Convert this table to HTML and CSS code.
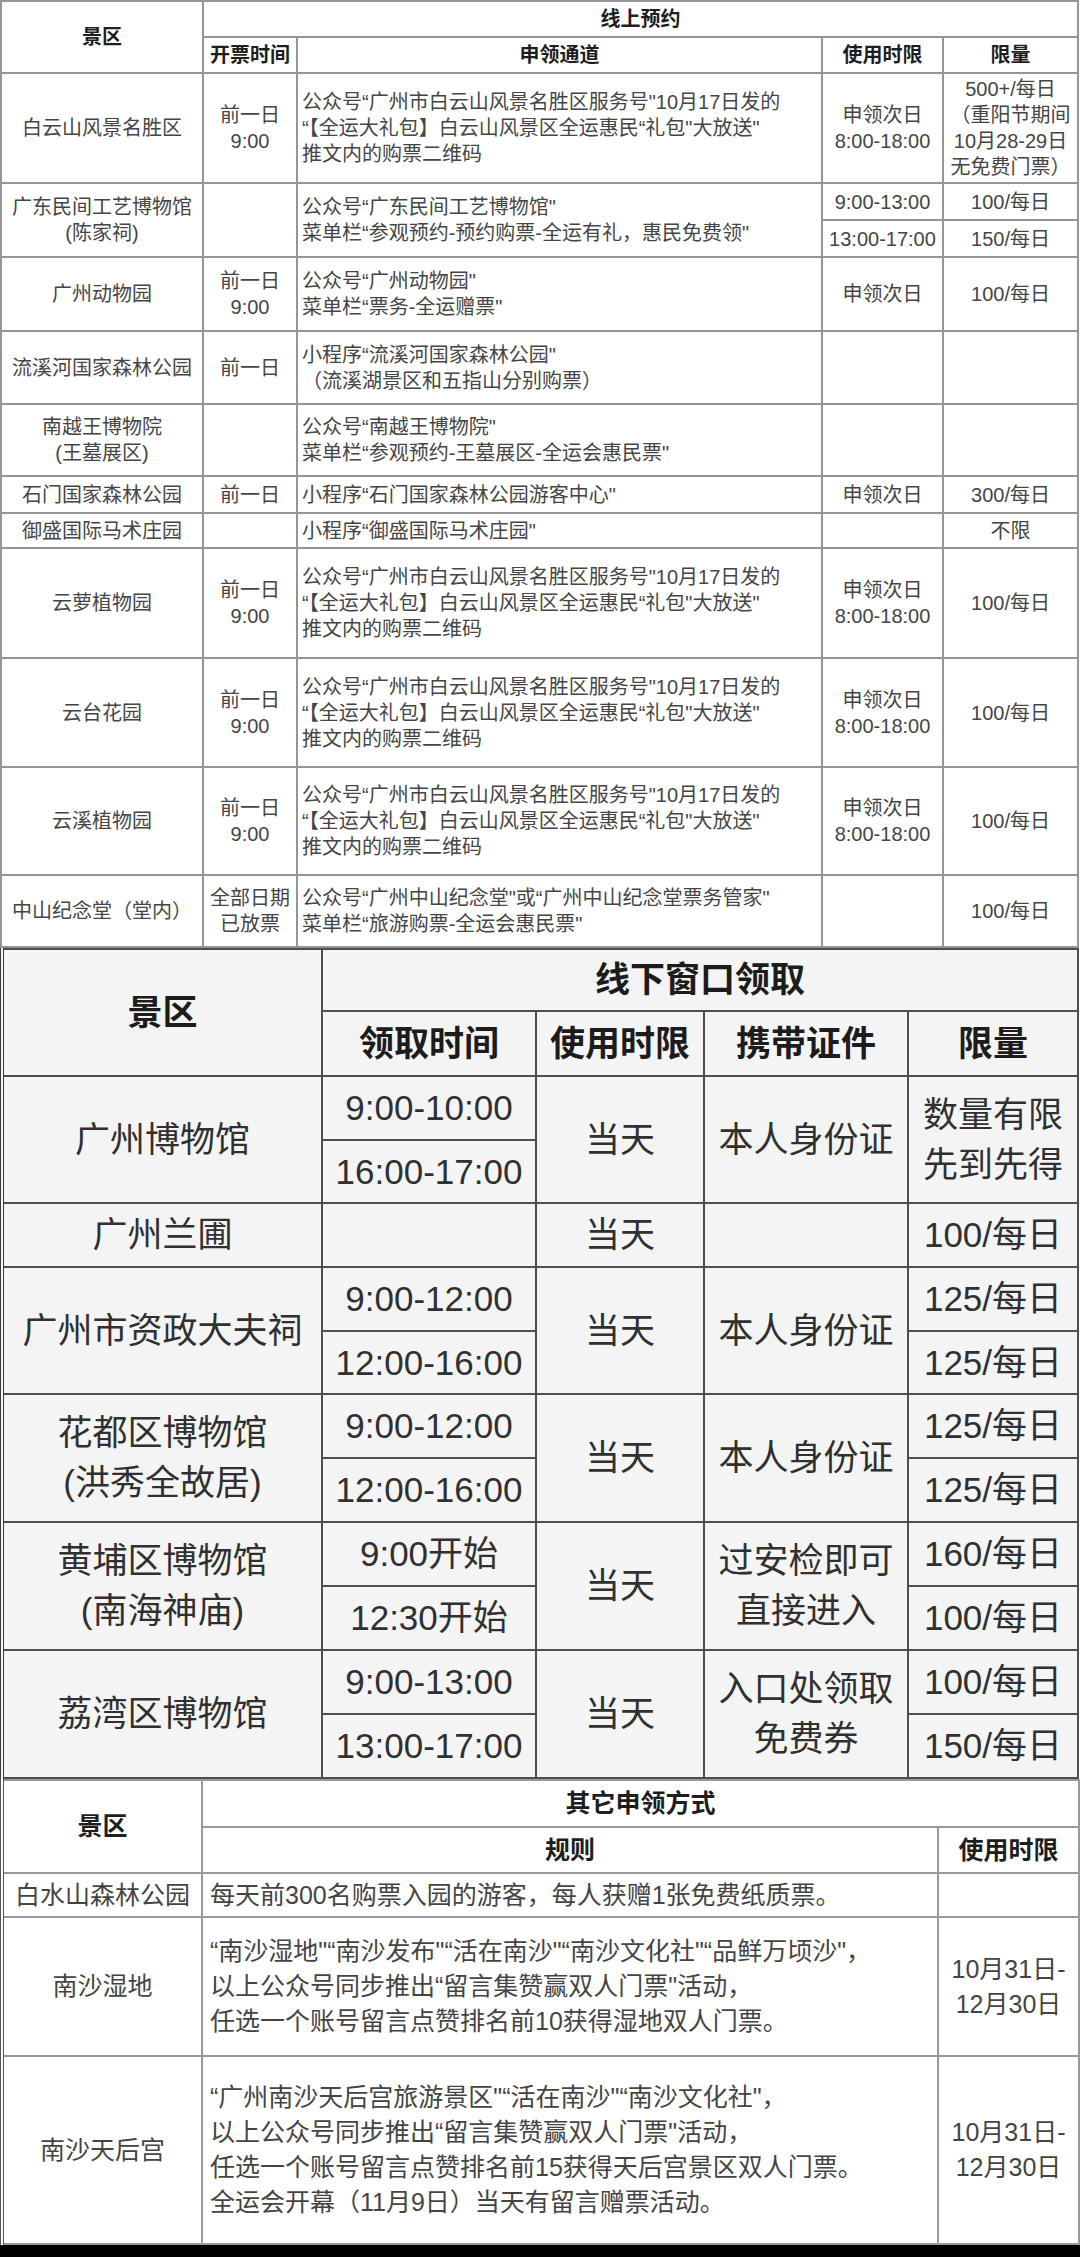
FILE: index.html
```html
<!DOCTYPE html>
<html lang="zh-CN">
<head>
<meta charset="utf-8">
<title>全运会惠民票领取方式</title>
<link rel="stylesheet" href="styles.css">
</head>
<body>
<div class="page">

<table class="t1">
  <colgroup>
    <col class="w202"><col class="w94"><col class="w525"><col class="w121"><col class="w135">
  </colgroup>
  <tr class="h36">
    <th rowspan="2">景区</th>
    <th colspan="4">线上预约</th>
  </tr>
  <tr class="h36">
    <th>开票时间</th><th>申领通道</th><th>使用时限</th><th>限量</th>
  </tr>
  <tr class="h110">
    <td>白云山风景名胜区</td>
    <td>前一日<br>9:00</td>
    <td class="l">公众号“广州市白云山风景名胜区服务号"10月17日发的<br>“【全运大礼包】白云山风景区全运惠民“礼包"大放送"<br>推文内的购票二维码</td>
    <td>申领次日<br>8:00-18:00</td>
    <td class="tight">500+/每日<br>（重阳节期间<br>10月28-29日<br>无免费门票）</td>
  </tr>
  <tr class="h37">
    <td rowspan="2">广东民间工艺博物馆<br>(陈家祠)</td>
    <td rowspan="2"></td>
    <td rowspan="2" class="l">公众号“广东民间工艺博物馆"<br>菜单栏“参观预约-预约购票-全运有礼，惠民免费领"</td>
    <td>9:00-13:00</td>
    <td>100/每日</td>
  </tr>
  <tr class="h37">
    <td>13:00-17:00</td>
    <td>150/每日</td>
  </tr>
  <tr class="h74">
    <td>广州动物园</td>
    <td>前一日<br>9:00</td>
    <td class="l">公众号“广州动物园"<br>菜单栏“票务-全运赠票"</td>
    <td>申领次日</td>
    <td>100/每日</td>
  </tr>
  <tr class="h73">
    <td>流溪河国家森林公园</td>
    <td>前一日</td>
    <td class="l">小程序“流溪河国家森林公园"<br>（流溪湖景区和五指山分别购票）</td>
    <td></td>
    <td></td>
  </tr>
  <tr class="h72">
    <td>南越王博物院<br>(王墓展区)</td>
    <td></td>
    <td class="l">公众号“南越王博物院"<br>菜单栏“参观预约-王墓展区-全运会惠民票"</td>
    <td></td>
    <td></td>
  </tr>
  <tr class="h37">
    <td>石门国家森林公园</td>
    <td>前一日</td>
    <td class="l">小程序“石门国家森林公园游客中心"</td>
    <td>申领次日</td>
    <td>300/每日</td>
  </tr>
  <tr class="h35">
    <td>御盛国际马术庄园</td>
    <td></td>
    <td class="l">小程序“御盛国际马术庄园"</td>
    <td></td>
    <td>不限</td>
  </tr>
  <tr class="h110">
    <td>云萝植物园</td>
    <td>前一日<br>9:00</td>
    <td class="l">公众号“广州市白云山风景名胜区服务号"10月17日发的<br>“【全运大礼包】白云山风景区全运惠民“礼包"大放送"<br>推文内的购票二维码</td>
    <td>申领次日<br>8:00-18:00</td>
    <td>100/每日</td>
  </tr>
  <tr class="h109">
    <td>云台花园</td>
    <td>前一日<br>9:00</td>
    <td class="l">公众号“广州市白云山风景名胜区服务号"10月17日发的<br>“【全运大礼包】白云山风景区全运惠民“礼包"大放送"<br>推文内的购票二维码</td>
    <td>申领次日<br>8:00-18:00</td>
    <td>100/每日</td>
  </tr>
  <tr class="h108">
    <td>云溪植物园</td>
    <td>前一日<br>9:00</td>
    <td class="l">公众号“广州市白云山风景名胜区服务号"10月17日发的<br>“【全运大礼包】白云山风景区全运惠民“礼包"大放送"<br>推文内的购票二维码</td>
    <td>申领次日<br>8:00-18:00</td>
    <td>100/每日</td>
  </tr>
  <tr class="h72">
    <td>中山纪念堂（堂内）</td>
    <td>全部日期<br>已放票</td>
    <td class="l">公众号“广州中山纪念堂"或“广州中山纪念堂票务管家"<br>菜单栏“旅游购票-全运会惠民票"</td>
    <td></td>
    <td>100/每日</td>
  </tr>
</table>

<table class="t2">
  <colgroup>
    <col class="w320"><col class="w214"><col class="w168"><col class="w204"><col class="w170">
  </colgroup>
  <tr class="h62">
    <th rowspan="2">景区</th>
    <th colspan="4">线下窗口领取</th>
  </tr>
  <tr class="h65">
    <th>领取时间</th><th>使用时限</th><th>携带证件</th><th>限量</th>
  </tr>
  <tr class="h64">
    <td rowspan="2">广州博物馆</td>
    <td>9:00-10:00</td>
    <td rowspan="2">当天</td>
    <td rowspan="2">本人身份证</td>
    <td rowspan="2">数量有限<br>先到先得</td>
  </tr>
  <tr class="h63">
    <td>16:00-17:00</td>
  </tr>
  <tr class="h64">
    <td>广州兰圃</td>
    <td></td>
    <td>当天</td>
    <td></td>
    <td>100/每日</td>
  </tr>
  <tr class="h64">
    <td rowspan="2">广州市资政大夫祠</td>
    <td>9:00-12:00</td>
    <td rowspan="2">当天</td>
    <td rowspan="2">本人身份证</td>
    <td>125/每日</td>
  </tr>
  <tr class="h63">
    <td>12:00-16:00</td>
    <td>125/每日</td>
  </tr>
  <tr class="h64">
    <td rowspan="2">花都区博物馆<br>(洪秀全故居)</td>
    <td>9:00-12:00</td>
    <td rowspan="2">当天</td>
    <td rowspan="2">本人身份证</td>
    <td>125/每日</td>
  </tr>
  <tr class="h64">
    <td>12:00-16:00</td>
    <td>125/每日</td>
  </tr>
  <tr class="h64">
    <td rowspan="2">黄埔区博物馆<br>(南海神庙)</td>
    <td>9:00开始</td>
    <td rowspan="2">当天</td>
    <td rowspan="2">过安检即可<br>直接进入</td>
    <td>160/每日</td>
  </tr>
  <tr class="h64">
    <td>12:30开始</td>
    <td>100/每日</td>
  </tr>
  <tr class="h64">
    <td rowspan="2">荔湾区博物馆</td>
    <td>9:00-13:00</td>
    <td rowspan="2">当天</td>
    <td rowspan="2">入口处领取<br>免费券</td>
    <td>100/每日</td>
  </tr>
  <tr class="h64">
    <td>13:00-17:00</td>
    <td>150/每日</td>
  </tr>
</table>

<table class="t3">
  <colgroup>
    <col class="w200"><col class="w736"><col class="w141">
  </colgroup>
  <tr class="h47">
    <th rowspan="2">景区</th>
    <th colspan="2">其它申领方式</th>
  </tr>
  <tr class="h46">
    <th>规则</th><th>使用时限</th>
  </tr>
  <tr class="h44">
    <td>白水山森林公园</td>
    <td class="l">每天前300名购票入园的游客，每人获赠1张免费纸质票。</td>
    <td></td>
  </tr>
  <tr class="h139">
    <td>南沙湿地</td>
    <td class="l">“南沙湿地"“南沙发布"“活在南沙"“南沙文化社"“品鲜万顷沙"，<br>以上公众号同步推出“留言集赞赢双人门票"活动，<br>任选一个账号留言点赞排名前10获得湿地双人门票。</td>
    <td>10月31日-<br>12月30日</td>
  </tr>
  <tr class="h188">
    <td>南沙天后宫</td>
    <td class="l">“广州南沙天后宫旅游景区"“活在南沙"“南沙文化社"，<br>以上公众号同步推出“留言集赞赢双人门票"活动，<br>任选一个账号留言点赞排名前15获得天后宫景区双人门票。<br>全运会开幕（11月9日）当天有留言赠票活动。</td>
    <td>10月31日-<br>12月30日</td>
  </tr>
</table>

<div class="bottom-bar"></div>
</div>
</body>
</html>
```

FILE: styles.css
```css
html, body {
  margin: 0;
  padding: 0;
  background: #ffffff;
}

.page {
  width: 1080px;
  display: flex;
  flex-direction: column;
  font-family: "Liberation Sans", "Noto Sans CJK SC", sans-serif;
}

table {
  border-collapse: collapse;
  table-layout: fixed;
}

td, th {
  padding: 0 4px;
  text-align: center;
  vertical-align: middle;
  white-space: nowrap;
}

th {
  font-weight: bold;
}

td.l {
  text-align: left;
}

/* column widths */
.w94  { width: 94px; }
.w121 { width: 121px; }
.w135 { width: 135px; }
.w141 { width: 141px; }
.w168 { width: 168px; }
.w170 { width: 170px; }
.w200 { width: 200px; }
.w202 { width: 202px; }
.w204 { width: 204px; }
.w214 { width: 214px; }
.w320 { width: 320px; }
.w525 { width: 525px; }
.w736 { width: 736px; }

/* row heights */
.h35 { height: 35px; }
.h36 { height: 36px; }
.h37 { height: 37px; }
.h44 { height: 44px; }
.h46 { height: 46px; }
.h47 { height: 47px; }
.h62 { height: 62px; }
.h63 { height: 63px; }
.h64 { height: 64px; }
.h65 { height: 65px; }
.h72 { height: 72px; }
.h73 { height: 73px; }
.h74 { height: 74px; }
.h108 { height: 108px; }
.h109 { height: 109px; }
.h110 { height: 110px; }
.h139 { height: 139px; }
.h188 { height: 188px; }

/* table 1: online booking */
.t1 {
  width: 1077px;
  font-size: 20px;
  line-height: 26px;
  color: #454545;
  background: #ffffff;
}
.t1 td, .t1 th {
  border: 2px solid #959595;
}
.t1 th {
  color: #1e1e1e;
}
.t1 td.tight {
  line-height: 26px;
  padding: 0;
}

/* table 2: offline window */
.t2 {
  width: 1076px;
  font-size: 35px;
  line-height: 50px;
  color: #303030;
  background: #f4f4f4;
  border-left: 4px double #3a3a3a;
}
.t2 td, .t2 th {
  border: 2px solid #4e4e4e;
  padding: 0 2px;
}
.t2 th {
  color: #1c1c1c;
}

/* table 3: other methods */
.t3 {
  width: 1077px;
  font-size: 25px;
  line-height: 35px;
  color: #444444;
  background: #ffffff;
  border-left: 4px double #555555;
}
.t3 td, .t3 th {
  border: 2px solid #9a9a9a;
}
.t3 td + td, .t3 th + th {
  border-left-color: #555555;
}
.t3 td.l {
  padding-left: 7px;
}
.t3 th {
  color: #1e1e1e;
}

.bottom-bar {
  height: 13px;
  background: #000000;
}
```
